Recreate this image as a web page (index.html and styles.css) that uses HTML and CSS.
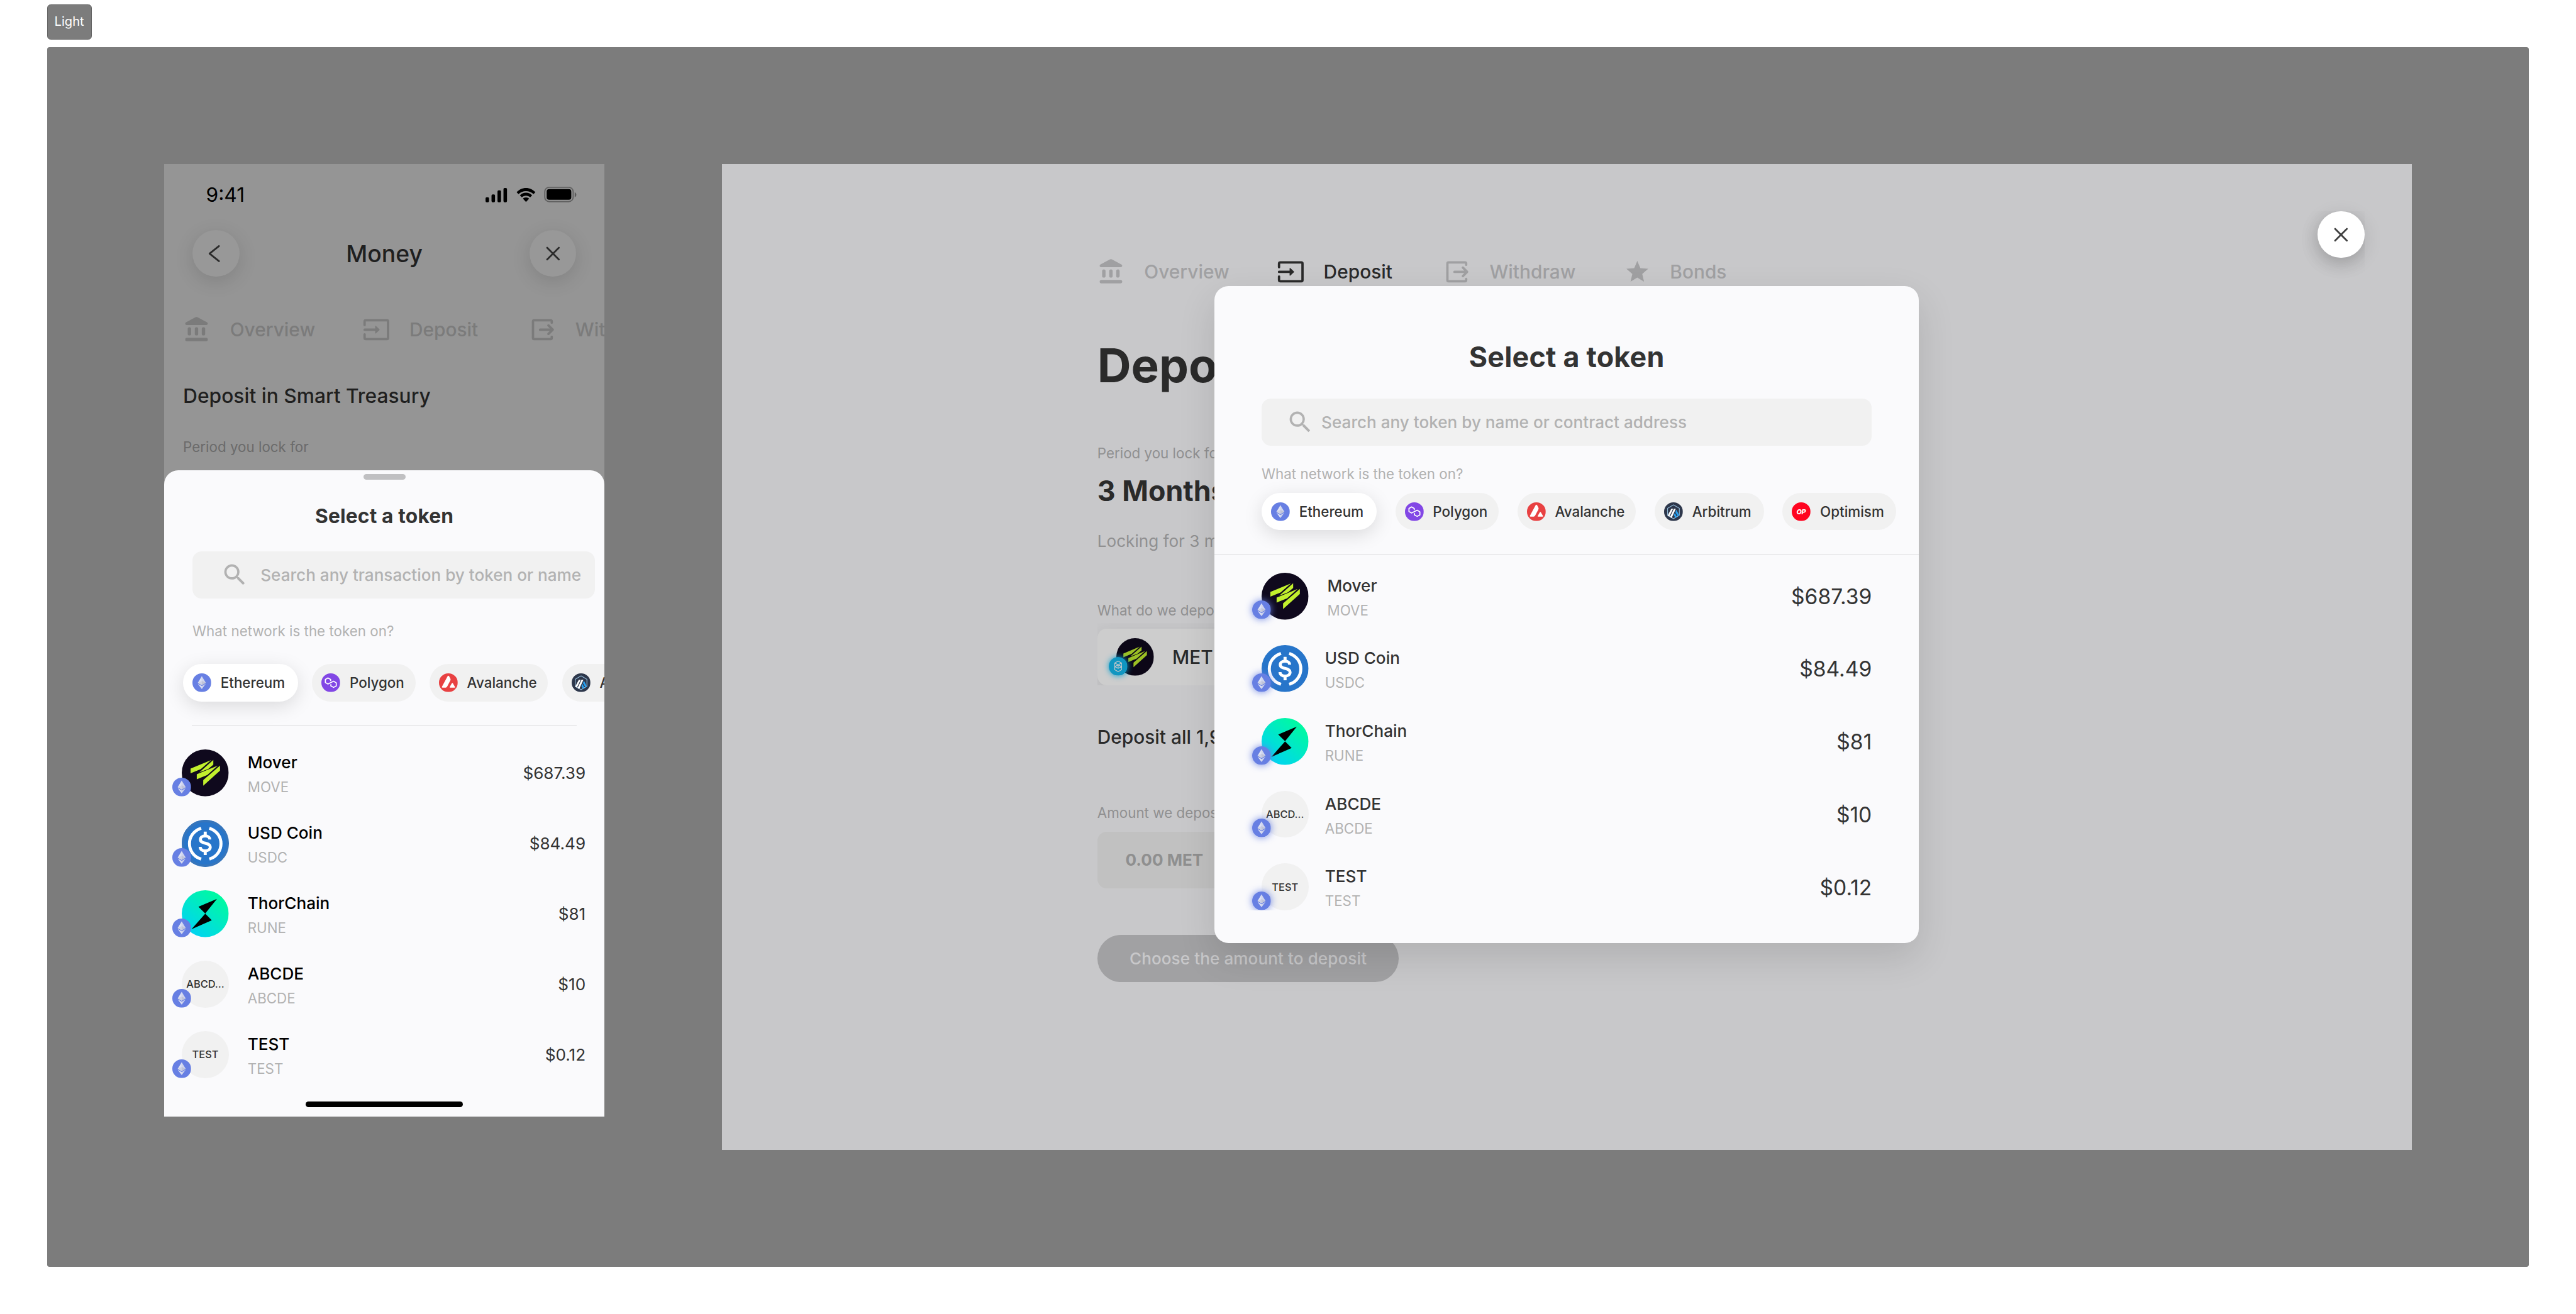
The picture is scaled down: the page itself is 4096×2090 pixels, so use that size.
FILE: index.html
```html
<!DOCTYPE html>
<html lang="en">
<head>
<meta charset="utf-8">
<title>Select a token</title>
<link rel="stylesheet" href="styles.css">
</head>
<body>
<svg class="sprite" aria-hidden="true">
  <symbol id="bank" viewBox="0 0 24 24"><path fill="currentColor" d="M10.7 1.4a1.7 1.7 0 0 1 1.6 0l8 4.2c.5.3.8.8.8 1.3 0 .7-.6 1.2-1.2 1.2H3.1c-.7 0-1.2-.5-1.2-1.2 0-.5.3-1 .8-1.3z"/><g fill="currentColor"><rect x="4" y="9.9" width="2.9" height="7" rx="1.4"/><rect x="10.05" y="9.9" width="2.9" height="7" rx="1.4"/><rect x="16" y="9.9" width="2.9" height="7" rx="1.4"/><rect x="1.9" y="18.9" width="19.2" height="2.9" rx="1.45"/></g></symbol>
  <symbol id="deposit" viewBox="0 0 24 24"><path fill="none" stroke="currentColor" stroke-width="2" stroke-linecap="round" d="M2 8V5q0-1 1-1h18q1 0 1 1v14q0 1-1 1H3q-1 0-1-1v-3M2 12h9"/><path fill="currentColor" stroke="currentColor" stroke-width=".8" stroke-linejoin="round" d="M11.4 9.1l3 2.9-3 2.9z"/></symbol>
  <symbol id="withdraw" viewBox="0 0 24 24"><path fill="none" stroke="currentColor" stroke-width="2" stroke-linecap="round" stroke-linejoin="round" d="M20 6V5q0-1-1-1H5Q4 4 4 5v14q0 1 1 1h14q1 0 1-1v-1M10 12h10.5M17.2 8.4l3.6 3.6-3.6 3.6"/></symbol>
  <symbol id="star" viewBox="0 0 24 24"><path fill="currentColor" transform="translate(12 11.5) scale(.93) translate(-12 -11.5)" d="M12 17.27L18.18 21l-1.64-7.03L22 9.24l-7.19-.61L12 2 9.19 8.63 2 9.24l5.46 4.73L5.82 21z"/></symbol>
  <symbol id="search" viewBox="0 0 24 24"><path fill="currentColor" d="M15.5 14h-.79l-.28-.27A6.471 6.471 0 0 0 16 9.5 6.5 6.5 0 1 0 9.5 16c1.61 0 3.09-.59 4.23-1.57l.27.28v.79l5 4.99L20.49 19zm-6 0C7.01 14 5 11.99 5 9.5S7.01 5 9.5 5 14 7.01 14 9.5 11.99 14 9.5 14z"/></symbol>
  <symbol id="close" viewBox="0 0 40 40"><path fill="none" stroke="currentColor" stroke-width="1.5" stroke-linecap="round" d="M15 15l10 10M25 15L15 25"/></symbol>
  <symbol id="back" viewBox="0 0 40 40"><path fill="none" stroke="currentColor" stroke-width="1.5" stroke-linecap="round" stroke-linejoin="round" d="M22.6 13.6L14.6 20l8 6.5"/></symbol>
  <symbol id="eth" viewBox="0 0 16 16"><circle cx="8" cy="8" r="8" fill="#677fe3"/><path fill="#dee2f4" d="M8 2.4V10.1L4.6 8z"/><path fill="#d0d5ed" d="M8 2.4V10.1L11.4 8z"/><path fill="#cdd1e4" d="M8 6.5v3.6L4.6 8z"/><path fill="#bfc3d8" d="M8 6.5v3.6L11.4 8z"/><path fill="#dee2f4" d="M4.6 8.8L8 10.9v2.5z"/><path fill="#cdd3ec" d="M11.4 8.8L8 10.9v2.5z"/></symbol>
  <symbol id="polygon" viewBox="0 0 16 16"><circle cx="8" cy="8" r="8" fill="#8247e5"/><path fill="none" stroke="#fff" stroke-width=".9" stroke-linejoin="round" d="M7.9 6.6V5.2L5.6 3.9 3.4 5.2v2.6l2.2 1.3 4.8-2.4 2.3 1.4v2.6L10.4 12l-2.3-1.3V9.2"/></symbol>
  <symbol id="avalanche" viewBox="0 0 16 16"><circle cx="8" cy="8" r="8" fill="#e84142"/><path fill="#fff" d="M7.3 2.5q.7-1.1 1.4 0l1.1 2.2q.2.6 0 1.2l-2.9 5.5q-.4.8-1.2.8H3q-.9 0-.4-.9zM10.9 8.6q.5-.8 1 0l1.7 2.9q.4.7-.4.7H9.6q-.8 0-.4-.7z"/></symbol>
  <symbol id="arbitrum" viewBox="0 0 16 16"><circle cx="8" cy="8" r="8" fill="#2d374b"/><path fill="none" stroke="#96bedc" stroke-width=".6" stroke-linejoin="round" d="M8 2.2l5 2.9v5.9l-5 2.9L3 11V5.1z"/><path fill="#28a0f0" d="M9.6 8.3l.9-2 2.3 4.6v.4l-1 .7zM9.2 9l-.9 1.8 1.4 2.500 1.300-.7z"/><path fill="#fff" d="M6.100 5.500h1.600l-3.300 6.700-1.400-.8zM8.400 5.500H10l-3.600 7.900-1.400-.8z"/></symbol>
  <symbol id="optimism" viewBox="0 0 16 16"><circle cx="8" cy="8" r="8" fill="#ff0420"/><text x="8" y="10.2" class="op-mark" text-anchor="middle">OP</text></symbol>
  <symbol id="fantom" viewBox="0 0 16 16"><circle cx="8" cy="8" r="8" fill="#1096c1"/><path fill="none" stroke="#c8c8ca" stroke-width=".6" stroke-linejoin="round" d="M8 3.5l2.9 1.6v5.8L8 12.5l-2.9-1.6V5.1zM5.1 5.1L8 6.7l2.9-1.6M5.1 8.2L8 6.7l2.9 1.5L8 9.7zM8 6.7v3"/></symbol>
  <symbol id="mover" viewBox="0 0 40 40"><circle cx="20" cy="20" r="20" fill="#0f091d"/><path fill="#c2f02d" d="M7.5 16.4L25 9.1l-8.7 7.7-8.8 3.6zM26.9 9v4l-4.3 3.6-7.6 2.9zM12.8 21.2l17.9-7.4-9 8-8.9 3.6zM32.6 13.8v4.3L18.3 31v-4.9z"/></symbol>
  <symbol id="usdc" viewBox="0 0 40 40"><circle cx="20" cy="20" r="20" fill="#2775ca"/><g fill="none" stroke="#fff"><path stroke-width="2.6" stroke-linecap="square" d="M15.3 7.6a13.6 13.6 0 0 0 0 25.400M24.700 7.600a13.600 13.600 0 0 1 0 25.400"/><path stroke-width="2.5" d="M23.900 16.700c0-1.900-1.700-3-3.900-3-2.400 0-4.100 1.100-4.100 3 0 2.200 1.900 2.700 4.100 3.200 2.300.5 4.300 1.100 4.300 3.300 0 2-1.800 3.200-4.300 3.200-2.600 0-4.300-1.300-4.300-3.400"/><path stroke-width="2.6" d="M20 10v3.5M20 26.5V30"/></g></symbol>
  <symbol id="rune" viewBox="0 0 40 40"><circle cx="20" cy="20" r="20" fill="url(#rune-fill)"/><path d="M30 7.4L20 19.8l-5.8-5.7zM20 20l5.6 5.6L8.3 33.2z"/></symbol>
  <defs><linearGradient id="rune-fill" x1=".15" y1=".95" x2=".85" y2=".1"><stop offset="0" stop-color="#00d2f6"/><stop offset="1" stop-color="#00fb9e"/></linearGradient></defs>
</svg>

<main class="canvas">
  <div class="tag">Light</div>
  <section class="board">

    <article class="phone">
      <div class="status">
        <span class="time">9:41</span>
        <svg class="status-icons" viewBox="0 -.5 78 13">
          <rect y="8" width="3" height="4.2" rx="1"/><rect x="5.1" y="5.5" width="3" height="6.7" rx="1"/><rect x="10.2" y="2" width="3" height="10.2" rx="1"/><rect x="15.3" width="3" height="12.2" rx="1"/>
          <path d="M34.5 2.7c2.4 0 4.7.9 6.4 2.6l1.6-1.6c-2.1-2.2-4.9-3.6-8-3.6s-5.9 1.4-8 3.6l1.6 1.6c1.7-1.7 4-2.6 6.4-2.6zM34.5 6.6c1.3 0 2.6.5 3.6 1.4l1.6-1.7c-1.4-1.4-3.2-2.2-5.2-2.2s-3.8.8-5.2 2.2L30.9 8c1-.9 2.3-1.4 3.6-1.4zM37.1 9.1c-.7-.6-1.6-1-2.6-1s-1.9.4-2.6 1l2.6 2.8z"/>
          <rect x="50.5" y="-.6" width="24.2" height="12.3" rx="3.8" fill="none" stroke="#000" stroke-opacity=".35"/><rect x="52.1" y="1" width="21" height="9.1" rx="2.2"/><path fill-opacity=".4" d="M76 3.6v4.3c.9-.3 1.4-1.2 1.4-2.1S76.900 4 76 3.600z"/>
        </svg>
      </div>
      <header class="nav">
        <button class="round"><svg><use href="#back"/></svg></button>
        <h2>Money</h2>
        <button class="round"><svg><use href="#close"/></svg></button>
      </header>
      <nav class="tabs">
        <a><svg><use href="#bank"/></svg>Overview</a>
        <a><svg><use href="#deposit"/></svg>Deposit</a>
        <a><svg><use href="#withdraw"/></svg>Withdraw</a>
      </nav>
      <h3>Deposit in Smart Treasury</h3>
      <p class="hint">Period you lock for</p>

      <div class="sheet">
        <div class="grabber"></div>
        <h2 class="title">Select a token</h2>
        <div class="search"><svg><use href="#search"/></svg>Search any transaction by token or name</div>
        <p class="label">What network is the token on?</p>
        <div class="chips">
          <span class="chip active"><svg><use href="#eth"/></svg>Ethereum</span>
          <span class="chip polygon"><svg><use href="#polygon"/></svg>Polygon</span>
          <span class="chip avalanche"><svg><use href="#avalanche"/></svg>Avalanche</span>
          <span class="chip arbitrum"><svg><use href="#arbitrum"/></svg>Arbitrum</span>
        </div>
        <hr>
        <ul class="tokens">
          <li><span class="coin"><svg><use href="#mover"/></svg><svg class="badge"><use href="#eth"/></svg></span><span class="names"><b>Mover</b><i>MOVE</i></span><span class="sum">$687.39</span></li>
          <li><span class="coin ringed"><svg><use href="#usdc"/></svg><svg class="badge"><use href="#eth"/></svg></span><span class="names"><b>USD Coin</b><i>USDC</i></span><span class="sum">$84.49</span></li>
          <li><span class="coin"><svg><use href="#rune"/></svg><svg class="badge"><use href="#eth"/></svg></span><span class="names"><b>ThorChain</b><i>RUNE</i></span><span class="sum">$81</span></li>
          <li><span class="coin blank">ABCD...<svg class="badge"><use href="#eth"/></svg></span><span class="names"><b>ABCDE</b><i>ABCDE</i></span><span class="sum">$10</span></li>
          <li><span class="coin blank">TEST<svg class="badge"><use href="#eth"/></svg></span><span class="names"><b>TEST</b><i>TEST</i></span><span class="sum">$0.12</span></li>
        </ul>
        <div class="home"></div>
      </div>
    </article>

    <article class="desktop">
      <div class="page">
        <nav class="tabs">
          <a><svg><use href="#bank"/></svg>Overview</a>
          <a class="current"><svg><use href="#deposit"/></svg>Deposit</a>
          <a><svg><use href="#withdraw"/></svg>Withdraw</a>
          <a><svg><use href="#star"/></svg>Bonds</a>
        </nav>
        <h1>Deposit in Smart Treasury</h1>
        <p class="hint">Period you lock for</p>
        <p class="period">3 Months</p>
        <p class="note">Locking for 3 months</p>
        <p class="hint asset-label">What do we deposit?</p>
        <div class="asset-clip"><div class="asset">
          <span class="coin small"><svg><use href="#mover"/></svg><svg class="badge"><use href="#fantom"/></svg></span>MET
        </div></div>
        <p class="all">Deposit all 1,999 MET</p>
        <p class="hint amount-label">Amount we deposit</p>
        <div class="amount">0.00 MET</div>
        <button class="submit">Choose the amount to deposit</button>
      </div>

      <button class="round dismiss"><svg><use href="#close"/></svg></button>

      <div class="modal">
        <h2 class="title">Select a token</h2>
        <div class="search"><svg><use href="#search"/></svg>Search any token by name or contract address</div>
        <p class="label">What network is the token on?</p>
        <div class="chips">
          <span class="chip active"><svg><use href="#eth"/></svg>Ethereum</span>
          <span class="chip polygon"><svg><use href="#polygon"/></svg>Polygon</span>
          <span class="chip avalanche"><svg><use href="#avalanche"/></svg>Avalanche</span>
          <span class="chip arbitrum"><svg><use href="#arbitrum"/></svg>Arbitrum</span>
          <span class="chip optimism"><svg><use href="#optimism"/></svg>Optimism</span>
        </div>
        <hr>
        <ul class="tokens">
          <li class="lead"><span class="coin"><svg><use href="#mover"/></svg><svg class="badge"><use href="#eth"/></svg></span><span class="names"><b>Mover</b><i>MOVE</i></span><span class="sum">$687.39</span></li>
          <li><span class="coin"><svg><use href="#usdc"/></svg><svg class="badge"><use href="#eth"/></svg></span><span class="names"><b>USD Coin</b><i>USDC</i></span><span class="sum">$84.49</span></li>
          <li><span class="coin"><svg><use href="#rune"/></svg><svg class="badge"><use href="#eth"/></svg></span><span class="names"><b>ThorChain</b><i>RUNE</i></span><span class="sum">$81</span></li>
          <li><span class="coin blank">ABCD...<svg class="badge"><use href="#eth"/></svg></span><span class="names"><b>ABCDE</b><i>ABCDE</i></span><span class="sum">$10</span></li>
          <li><span class="coin blank">TEST<svg class="badge"><use href="#eth"/></svg></span><span class="names"><b>TEST</b><i>TEST</i></span><span class="sum">$0.12</span></li>
        </ul>
      </div>
    </article>
  </section>
</main>
</body>
</html>
```
FILE: styles.css
```css
/* 1rem = 10 design units */
html { font-size: 18.6606px; }
* { box-sizing: border-box; margin: 0; padding: 0; }
body {
  font-family: Inter, "Liberation Sans", sans-serif;
  background: #fff;
  color: #333;
  overflow: hidden;
}
.sprite { position: absolute; width: 0; height: 0; }
button { border: 0; font: inherit; color: inherit; }
svg { display: block; flex: none; overflow: visible; }

.canvas { padding: .4rem 4rem 0; }
.tag {
  width: 3.8rem; height: 3rem;
  border: .1rem solid #646464; border-radius: .3rem;
  background: #7c7c7c; color: #fff;
  font-size: 1.08rem; line-height: 2.8rem; text-align: center;
}
.board {
  display: flex; align-items: flex-start; gap: 10rem;
  width: 211.5rem; height: 104rem;
  margin-top: .6rem; padding: 10rem;
  background: #7c7c7c; border-radius: .2rem;
}

/* shared pieces */
.round {
  width: 4rem; height: 4rem; border-radius: 50%;
  background: #989898; color: #2b2b2b;
  box-shadow: 0 .4rem 1.6rem rgba(0,0,0,.13);
}
.round svg { width: 4rem; height: 4rem; }
.tabs { display: flex; gap: 4.03rem; }
.tabs a {
  display: flex; align-items: center; gap: 1.6rem;
  font-size: 1.6rem; font-weight: 500; line-height: 2.4rem; white-space: nowrap;
}
.tabs a:nth-child(2) { margin-right: .25rem; }
.tabs svg { width: 2.4rem; height: 2.4rem; }
.title { font-weight: 700; text-align: center; color: #333; letter-spacing: .005em; }
.search {
  display: flex; align-items: center;
  height: 4rem; border-radius: .8rem;
  background: #f1f1f1; color: #b2b2b2;
  font-size: 1.4rem; font-weight: 500; white-space: nowrap;
}
.search svg { width: 2.4rem; height: 2.4rem; }
.label { font-size: 1.2rem; line-height: 1.6rem; color: #b2b2b2; }
.chips { display: flex; white-space: nowrap; }
.chip {
  display: flex; align-items: center; gap: .8rem; flex: none;
  width: 9.8rem; height: 3.2rem; padding-left: .8rem; border-radius: 1.6rem;
  background: #f1f1f1; color: #333;
  font-size: 1.2rem; font-weight: 500;
}
.chip.polygon { width: 8.8rem; }
.chip.avalanche { width: 10.1rem; }
.chip.arbitrum { width: 9.3rem; }
.chip.optimism { width: 9.7rem; }
.chip svg { width: 1.6rem; height: 1.6rem; }
.chip.active { background: #fff; box-shadow: 0 .4rem 1.6rem rgba(0,0,0,.13); }
.op-mark { font: italic 800 5.8px Inter, sans-serif; fill: #fff; letter-spacing: -.2px; }
hr { border: 0; height: .1rem; background: #ebebed; }
.tokens { list-style: none; display: flex; flex-direction: column; }
.tokens li { display: flex; align-items: center; height: 4rem; }
.coin { position: relative; width: 4rem; height: 4rem; border-radius: 50%; flex: none; }
.coin > svg { width: 100%; height: 100%; }
.coin > .badge {
  position: absolute; left: -.8rem; bottom: 0; z-index: 1;
  width: 1.6rem; height: 1.6rem; border-radius: 50%;
}
.coin.blank {
  display: flex; align-items: center; justify-content: center;
  background: #f1f1f1; color: #333; font-size: .88rem; font-weight: 500;
}
.coin.ringed::after {
  content: ""; position: absolute; inset: 0;
  border: .22rem solid #3575bc; border-radius: 50%;
}
.names { display: flex; flex-direction: column; flex: 1; align-self: flex-start; white-space: nowrap; }
.names b { font-size: 1.4rem; line-height: 2.2rem; font-weight: 500; }
.names i { font-size: 1.2rem; line-height: 2rem; font-style: normal; color: #b2b2b2; }
.sum { color: #333; }

/* phone */
.phone {
  position: relative; flex: none; overflow: hidden;
  width: 37.5rem; height: 81.2rem; background: #959595; color: #1f1f1f;
}
.status {
  display: flex; align-items: center; justify-content: space-between;
  height: 5.2rem; padding: 0 2.35rem 0 3.55rem;
}
.time { font-size: 1.7rem; font-weight: 400; color: #000; }
.status-icons { width: 7.8rem; height: 1.3rem; }
.nav {
  display: flex; align-items: center; justify-content: space-between;
  margin-top: .4rem; padding: 0 2.4rem;
}
.nav h2 { font-size: 2rem; font-weight: 500; }
.phone .tabs { margin-top: 3.33rem; padding-left: 1.6rem; color: #7b7b7b; }
.phone h3 { margin-top: 3.4rem; padding-left: 1.6rem; font-size: 1.7rem; line-height: 2rem; font-weight: 500; }
.hint { font-size: 1.2rem; line-height: 1.6rem; }
.phone .hint { margin-top: 2.56rem; padding-left: 1.6rem; color: #6b6b6b; }
.sheet {
  position: absolute; left: 0; right: 0; top: 26.1rem; bottom: 0;
  padding-top: .3rem; background: #fafafc; border-radius: 1.2rem 1.2rem 0 0;
}
.grabber { width: 3.6rem; height: .5rem; margin: 0 auto; border-radius: .25rem; background: #c0c0c2; }
.sheet .title { margin-top: 2.1rem; font-size: 1.7rem; line-height: 2rem; }
.sheet .search { width: 34.3rem; margin: 2rem 0 0 2.4rem; padding-left: 2.4rem; gap: 1rem; }
.sheet .label { margin: 2rem 0 0 2.4rem; }
.sheet .chips { margin-top: 2rem; padding-left: 1.6rem; gap: 1.2rem; }
.sheet hr { margin: 2rem 2.35rem 0; }
.sheet .tokens { margin-top: 2rem; padding: 0 1.6rem 0 1.5rem; gap: 2rem; }
.sheet .names { margin-left: 1.6rem; }
.sheet .names b { color: #000; }
.sheet .sum { font-size: 1.4rem; }
.home { width: 13.4rem; height: .5rem; margin: 2rem auto 0; border-radius: .25rem; background: #000; }

/* desktop */
.desktop {
  position: relative; isolation: isolate; flex: none;
  width: 144rem; height: 84rem; background: #c8c8ca; color: #2a2a2a;
}
.page { display: flex; flex-direction: column; align-items: flex-start; padding: 8rem 0 0 32rem; white-space: nowrap; }
.page .tabs { color: #a0a0a2; line-height: 2.5rem; }
.page .current { color: #2a2a2a; }
.page h1 { margin-top: 4.4rem; font-size: 4rem; line-height: 4.8rem; font-weight: 700; }
.page .hint { color: #909091; margin-top: 4.22rem; }
.period { margin-top: 1.04rem; font-size: 2.4rem; line-height: 2.8rem; font-weight: 700; }
.note { margin-top: 1.86rem; font-size: 1.4rem; line-height: 2rem; color: #909091; }
.page .asset-label { margin-top: 4.09rem; }
.asset-clip { width: 50rem; margin-top: .3rem; padding-top: .5rem; overflow: hidden; }
.asset {
  display: flex; align-items: center; gap: 1.6rem;
  height: 4.8rem; padding-left: 1.6rem; border-radius: .8rem;
  background: #cdcdcd; box-shadow: 0 .4rem 1.6rem rgba(0,0,0,.1);
  font-size: 1.6rem; font-weight: 500;
}
.coin.small { width: 3.2rem; height: 3.2rem; }
.coin.small > svg:first-child { filter: brightness(.8); }
.coin.small > .badge { left: -.6rem; box-shadow: 0 0 .5rem #12a4d2; }
.all { margin-top: 3.43rem; font-size: 1.6rem; line-height: 2rem; font-weight: 500; }
.page .amount-label { margin-top: 4.67rem; }
.amount {
  width: 50rem; height: 4.8rem; margin-top: .8rem; padding-left: 2.4rem;
  border-radius: .8rem; background: #c1c1c1; color: #8f8f8f;
  font-size: 1.4rem; font-weight: 700; line-height: 4.8rem;
}
.submit {
  width: 25.7rem; height: 4rem; margin-top: 4rem; border-radius: 2rem;
  background: #a1a1a3; color: #c8c8ca; font-size: 1.4rem; font-weight: 500;
  letter-spacing: .003em;
}
.dismiss {
  position: absolute; right: 4rem; top: 4rem; background: #fff; color: #404040;
}
.dismiss::before {
  content: ""; position: absolute; inset: 0; z-index: -1; border-radius: 50%;
  box-shadow: 0 .4rem 1.6rem rgba(0,0,0,.13); clip-path: inset(0 0 -3rem -3rem);
}
.modal {
  position: absolute; left: 42rem; top: 10.4rem; width: 60rem; height: 56rem;
  padding-top: 4.58rem; border-radius: 1.2rem; background: #fafafc;
  box-shadow: 0 1.2rem 3.2rem rgba(0,0,0,.12);
}
.modal .title { font-size: 2.4rem; line-height: 3rem; }
.modal .search { margin: 2.02rem 4rem 0; padding-left: 2.1rem; gap: .6rem; }
.modal .label { margin: 1.6rem 0 0 4rem; }
.modal .chips { margin-top: .8rem; padding-left: 4rem; gap: 1.6rem; }
.modal hr { margin-top: 2rem; }
.modal .tokens { margin-top: 1.5rem; padding: 0 4rem; gap: 2.2rem; overflow: hidden; }
.modal .badge { box-shadow: 0 0 .6rem rgba(103,127,227,.9); }
.modal .names { margin-left: 1.4rem; }
.modal .lead .names { margin-left: 1.6rem; }
.modal .names b { color: #333; }
.modal .sum { font-size: 1.8rem; padding-top: .05rem; }
```
